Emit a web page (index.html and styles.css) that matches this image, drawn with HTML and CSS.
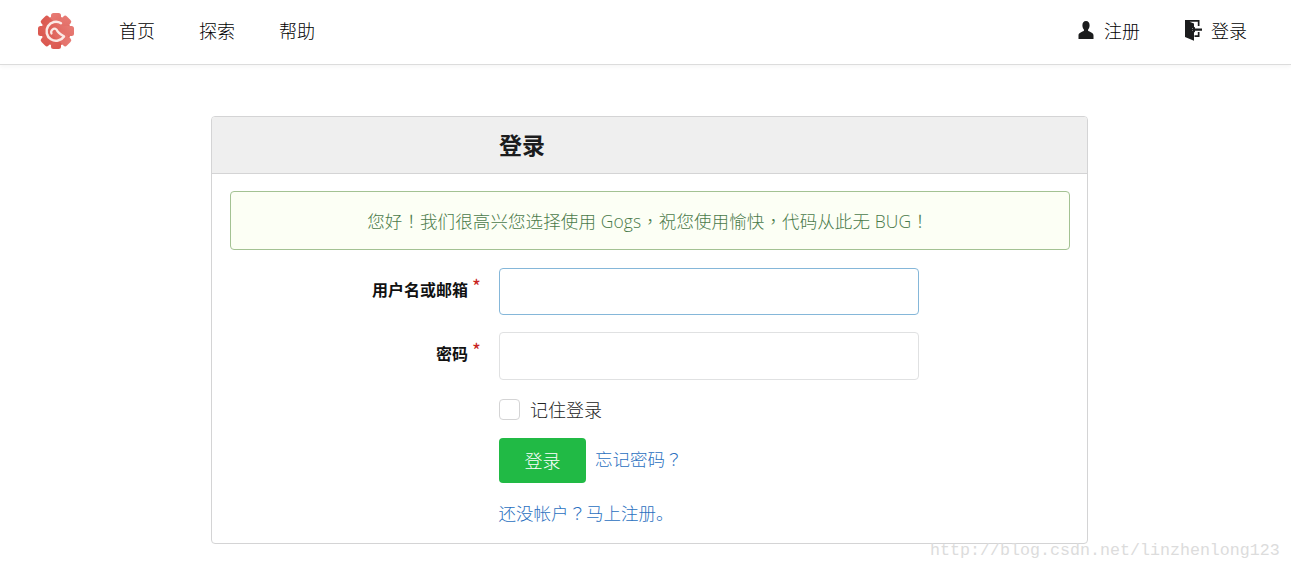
FILE: index.html
```html
<!DOCTYPE html>
<html lang="zh-CN">
<head>
<meta charset="utf-8">
<title>登录 - Gogs</title>
<link rel="stylesheet" href="styles.css">
</head>
<body>
<header class="topbar">
  <svg class="logo" viewBox="0 0 38 38" width="38" height="38">
    <defs><linearGradient id="lg" gradientUnits="userSpaceOnUse" x1="6" y1="2" x2="30" y2="36"><stop offset="0" stop-color="#e9807a"/><stop offset="1" stop-color="#d9534a"/></linearGradient></defs>
    <g fill="url(#lg)">
      <circle cx="19" cy="19" r="14.800"/>
      <rect x="14" y="1" width="10" height="36" rx="2.500"/>
      <rect x="14" y="1" width="10" height="36" rx="2.500" transform="rotate(45 19 19)"/>
      <rect x="14" y="1" width="10" height="36" rx="2.500" transform="rotate(90 19 19)"/>
      <rect x="14" y="1" width="10" height="36" rx="2.500" transform="rotate(135 19 19)"/>
    </g>
    <path fill="none" stroke="#fbe9e6" stroke-width="2.500" stroke-linecap="round" d="M24 11.200A9.500 9.500 0 1 0 27 24.500"/>
    <path fill="none" stroke="#fbe9e6" stroke-width="2.200" stroke-linecap="round" d="M14.500 21.500A3.300 3.300 0 0 1 19.500 17.500Q21 21 26.500 24"/>
  </svg>
  <nav class="nav-main">
    <a href="#">首页</a>
    <a href="#">探索</a>
    <a href="#">帮助</a>
  </nav>
  <nav class="nav-user">
    <a href="#">
      <svg class="icon" viewBox="0 0 16 18" width="16" height="18"><path fill="#1b1c1d" d="M8 0c2.300 0 3.600 1.800 3.600 4.200 0 1.800-.6 3.400-1.500 4.400v1.500c2.500.9 5.400 2 5.400 4.400V18H.500v-3.500c0-2.400 2.900-3.500 5.400-4.400V8.600C5 7.600 4.400 6 4.400 4.200 4.400 1.800 5.700 0 8 0z"/></svg>
      注册
    </a>
    <a href="#" class="login">
      <svg class="icon" viewBox="0 0 17 21" width="17" height="21"><path fill="#1b1c1d" d="M0 0h14.500v6h-1.700V1.700H4.500L9 3.500V8H7v3h2v9.800L0 17z"/><path fill="#1b1c1d" d="M12.800 12h1.700v5H9.500v-1.700h3.300z"/><path fill="#1b1c1d" d="M6 9.500 10 6.800v1.700h7v2.200h-7v1.700z"/></svg>
      登录
    </a>
  </nav>
</header>

<main class="page">
  <section class="card">
    <h3 class="card-title"><span>登录</span></h3>
    <div class="card-body">
      <p class="notice">您好<span class="pn" lang="zh-TW">！</span>我们很高兴您选择使用 Gogs<span class="pn" lang="zh-TW">，</span>祝您使用愉快<span class="pn" lang="zh-TW">，</span>代码从此无 BUG<span class="pn" lang="zh-TW">！</span></p>
      <form class="form">
        <div class="row">
          <label class="label">用户名或邮箱<i class="req">*</i></label>
          <div class="input focused"></div>
        </div>
        <div class="row row-pass">
          <label class="label">密码<i class="req">*</i></label>
          <div class="input"></div>
        </div>
        <div class="remember"><span class="check"></span><span>记住登录</span></div>
        <div class="actions"><button type="button" class="btn"><span>登录</span></button><a href="#">忘记密码<span class="pn" lang="zh-TW">？</span></a></div>
        <div class="signup"><a href="#">还没帐户<span class="pn" lang="zh-TW">？</span>马上注册。</a></div>
      </form>
    </div>
  </section>
</main>
<div class="watermark">http://blog.csdn.net/linzhenlong123</div>
</body>
</html>
```

FILE: styles.css
```css
* { box-sizing: border-box; }
html, body { margin: 0; height: 100%; overflow: hidden; }
body {
  background: #fff;
  color: #000;
  font-family: "Noto Sans CJK SC", "Open Sans", sans-serif;
  font-size: 18px;
  font-weight: 300;
  position: relative;
}
a { color: inherit; text-decoration: none; }
.pn { font-family: "Noto Sans CJK TC", sans-serif; }

.topbar {
  height: 65px;
  display: flex;
  align-items: center;
  padding: 0 44px 0 37px;
  border-bottom: 1px solid #dcdcdc;
  box-shadow: 0 2px 4px rgba(0, 0, 0, .04);
}
.logo { flex: none; margin-top: -3px; }
.nav-main { display: flex; gap: 44px; margin-left: 44px; margin-top: -4px; }
.nav-user { display: flex; gap: 45px; margin-left: auto; margin-top: -4px; }
.nav-user a { display: flex; align-items: center; gap: 10px; }
.nav-user .login { gap: 9px; }
.icon { flex: none; }

.page { padding-top: 51px; padding-left: 211px; }
.card {
  width: 877px;
  height: 428px;
  border: 1px solid #d4d4d5;
  border-radius: 4px;
}
.card-title {
  margin: 0;
  height: 57px;
  background: #efefef;
  border-bottom: 1px solid #d4d4d5;
  border-radius: 3px 3px 0 0;
  padding-left: 287px;
  font-size: 23px;
  font-weight: 700;
  line-height: 54px;
  color: #1b1c1d;
}
.card-body { padding: 17px 17px 0 18px; }
.notice {
  margin: 0;
  height: 59px;
  padding-right: 4px;
  border: 1px solid #a3c293;
  border-radius: 4px;
  background: #fcfff5;
  color: #4a7a4a;
  font-family: "Open Sans", "Noto Sans CJK SC", sans-serif;
  font-size: 17.500px;
  letter-spacing: .1px;
  text-align: center;
  line-height: 57px;
}
.row { display: flex; margin-top: 18px; }
.row-pass { margin-top: 17px; }
.label {
  width: 249px;
  padding-top: 8px;
  text-align: right;
  font-size: 16px;
  font-weight: 700;
  line-height: 24px;
  color: #111;
}
.req {
  display: inline-block;
  width: 7px;
  margin-left: 4px;
  color: #c82420;
  font-style: normal;
  font-weight: 400;
  font-size: 19px;
  line-height: 1;
  vertical-align: 2px;
  text-align: left;
}
.input {
  width: 420px;
  height: 47px;
  margin-left: 20px;
  border: 1px solid #e0e1e2;
  border-radius: 4px;
  background: #fff;
}
.row-pass .input { height: 48px; }
.input.focused { border-color: #85b7d9; }

.remember {
  display: flex;
  align-items: center;
  gap: 10px;
  height: 22px;
  margin: 18px 0 0 269px;
  color: #222;
}
.check {
  width: 21px;
  height: 21px;
  margin-top: 1px;
  border: 1px solid #d4d4d5;
  border-radius: 4px;
  background: #fff;
}
.actions {
  display: flex;
  align-items: center;
  gap: 9px;
  margin: 18px 0 0 269px;
  color: #2a70c0;
}
.actions a { margin-top: -5px; font-size: 17.500px; }
.btn {
  width: 87px;
  height: 45px;
  padding: 0 0 2px;
  border: 0;
  border-radius: 4px;
  background: #21ba45;
  color: #fff;
  font: inherit;
}
.signup { margin: 16px 0 0 268.500px; color: #2a70c0; font-size: 17.500px; line-height: 28px; }

.watermark {
  position: absolute;
  left: 930px;
  top: 541px;
  color: #dcdcdc;
  font-family: "Liberation Mono", monospace;
  font-size: 16.670px;
  font-weight: 400;
  line-height: 20px;
  white-space: nowrap;
}
```
